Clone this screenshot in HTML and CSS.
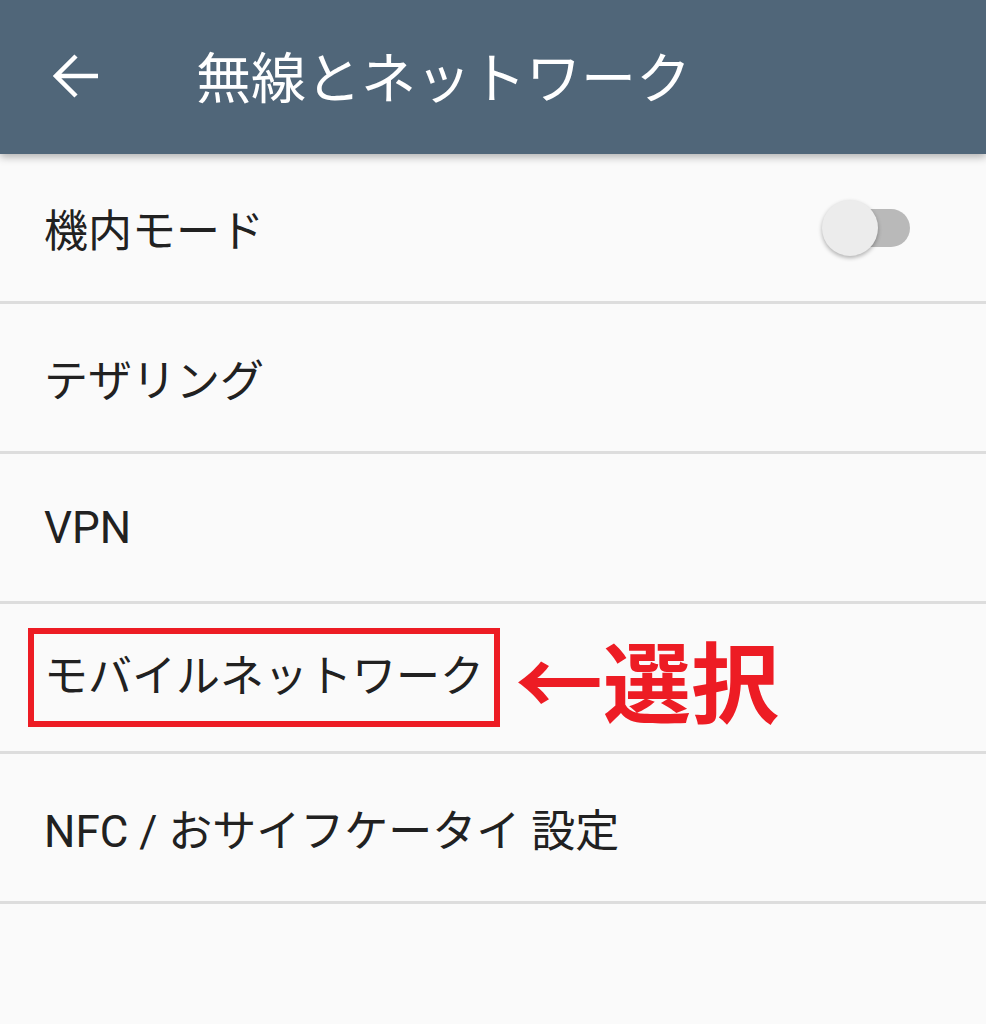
FILE: index.html
```html
<!DOCTYPE html>
<html>

<head>
    <meta charset="UTF-8" />
    <meta name="viewport" content="width=device-width, initial-scale=1.0" />
    <title>無線とネットワーク</title>
    <link rel="stylesheet" href="styles.css">
</head>

<body>

    <div class="bar">
        <div class="back">
            <svg width="46" height="44" viewBox="0 0 46 44">
                <path d="M45 22H4M23 2L3 22l20 20" fill="none" stroke="#fff" stroke-width="4.5" />
            </svg>
        </div>
        <div class="title">無線とネットワーク</div>
    </div>

    <div class="list">
        <div class="row">
            <div class="label">機内モード</div>
            <div class="toggle">
                <div class="track"></div>
                <div class="thumb"></div>
            </div>
        </div>
        <div class="row">
            <div class="label">テザリング</div>
        </div>
        <div class="row">
            <div class="label">VPN</div>
        </div>
        <div class="row">
            <div class="label marked">モバイルネットワーク</div>
            <div class="note">←選択</div>
        </div>
        <div class="row">
            <div class="label">NFC / おサイフケータイ 設定</div>
        </div>
    </div>

</body>

</html>
```

FILE: styles.css
```css
body {
    margin: 0;
    background-color: #fafafa;
    font-family: Roboto, "Noto Sans CJK JP", sans-serif;
    color: #212121;
}

.bar {
    height: 154px;
    background-color: #506679;
    display: flex;
    align-items: center;
    box-shadow: 0 3px 8px rgba(0, 0, 0, 0.3);
    position: relative;
}

.back {
    margin-left: 53px;
    width: 46px;
    height: 44px;
    margin-top: -2px;
}

.back svg {
    display: block;
}

.title {
    margin-left: 97px;
    font-size: 55px;
    color: white;
    margin-top: -6px;
}

.row {
    height: 150px;
    box-sizing: border-box;
    border-bottom: 3px solid #dddddd;
    display: flex;
    align-items: center;
    padding-left: 44px;
}

.label {
    font-size: 44px;
}

.marked {
    margin-left: -16px;
    padding: 20px 10px;
    border: 6px solid #ed1c24;
    line-height: 47px;
}

.note {
    margin-left: 15px;
    font-size: 88px;
    font-weight: bold;
    color: #ed1c24;
    font-family: "Noto Sans CJK JP", sans-serif;
}

.toggle {
    margin-left: auto;
    margin-right: 74px;
    width: 90px;
    height: 58px;
    position: relative;
}

.track {
    position: absolute;
    left: 17px;
    top: 10px;
    width: 71px;
    height: 38px;
    border-radius: 19px;
    background-color: #b9b9b9;
}

.thumb {
    position: absolute;
    left: 0;
    top: 1px;
    width: 56px;
    height: 56px;
    border-radius: 50%;
    background-color: #ececec;
    box-shadow: 0 2px 4px rgba(0, 0, 0, 0.3);
}
```
